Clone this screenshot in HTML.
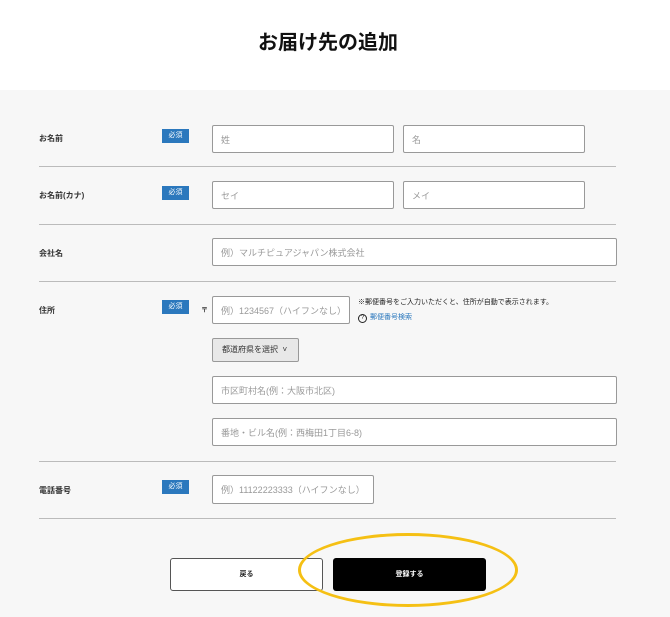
<!DOCTYPE html>
<html><head><meta charset="utf-8"><style>
*{margin:0;padding:0;box-sizing:border-box}
body{width:670px;height:617px;background:#fff;font-family:"Liberation Sans","Noto Sans CJK JP",sans-serif;position:relative;overflow:hidden}
.a{position:absolute}
.gray{left:0;top:90px;width:670px;height:527px;background:#f7f7f7}
h1{position:absolute;left:-7px;width:670px;top:26px;text-align:center;font-size:20px;font-weight:bold;color:#111}
.lb{font-size:8px;font-weight:bold;color:#333}
.bd{width:27px;height:14px;background:#2b78bd;color:#fff;font-size:7px;text-align:center;line-height:14px}
.in{background:#fff;border:1px solid #999;border-radius:2px;font-size:9px;color:#999;padding-left:8px;display:flex;align-items:center}
.ln{left:39px;width:577px;height:1px;background:#bbb}
</style></head><body>
<h1>お届け先の追加</h1>
<div class="a gray"></div>
<div class="a lb" style="left:39px;top:133px">お名前</div>
<div class="a bd" style="left:162px;top:129px">必須</div>
<div class="a in" style="left:212px;top:125px;width:182px;height:28px">姓</div>
<div class="a in" style="left:403px;top:125px;width:182px;height:28px">名</div>
<div class="a ln" style="top:166px"></div>
<div class="a lb" style="left:39px;top:190px">お名前(カナ)</div>
<div class="a bd" style="left:162px;top:186px">必須</div>
<div class="a in" style="left:212px;top:181px;width:182px;height:28px">セイ</div>
<div class="a in" style="left:403px;top:181px;width:182px;height:28px">メイ</div>
<div class="a ln" style="top:224px"></div>
<div class="a lb" style="left:39px;top:248px">会社名</div>
<div class="a in" style="left:212px;top:238px;width:405px;height:28px">例）マルチピュアジャパン株式会社</div>
<div class="a ln" style="top:281px"></div>
<div class="a lb" style="left:39px;top:305px">住所</div>
<div class="a bd" style="left:162px;top:300px">必須</div>
<div class="a lb" style="left:201px;top:305px;font-size:7px">〒</div>
<div class="a in" style="left:212px;top:296px;width:138px;height:28px">例）1234567（ハイフンなし）</div>
<div class="a" style="left:358px;top:297px;font-size:7px;color:#222">※郵便番号をご入力いただくと、住所が自動で表示されます。</div>
<div class="a" style="left:358px;top:312px;font-size:7px;color:#2b78bd"><span style="display:inline-block;width:9px;height:9px;border:1px solid #222;border-radius:50%;color:#222;font-size:6px;text-align:center;line-height:7px;margin-right:3px">?</span>郵便番号検索</div>
<div class="a" style="left:212px;top:338px;width:87px;height:24px;background:#e8e8e8;border:1px solid #999;border-radius:2px;font-size:8px;color:#333;line-height:22px;padding-left:9px">都道府県を選択 &nbsp;˅</div>
<div class="a in" style="left:212px;top:376px;width:405px;height:28px">市区町村名(例：大阪市北区)</div>
<div class="a in" style="left:212px;top:418px;width:405px;height:28px">番地・ビル名(例：西梅田1丁目6-8)</div>
<div class="a ln" style="top:461px"></div>
<div class="a lb" style="left:39px;top:485px">電話番号</div>
<div class="a bd" style="left:162px;top:480px">必須</div>
<div class="a in" style="left:212px;top:475px;width:162px;height:29px">例）11122223333（ハイフンなし）</div>
<div class="a ln" style="top:518px"></div>
<div class="a" style="left:170px;top:558px;width:153px;height:33px;background:#fff;border:1px solid #555;border-radius:3px;font-size:7px;font-weight:bold;text-align:center;line-height:31px;color:#222">戻る</div>
<div class="a" style="left:333px;top:558px;width:153px;height:33px;background:#000;border-radius:3px;font-size:7px;font-weight:bold;text-align:center;line-height:33px;color:#fff">登録する</div>
<div class="a" style="left:298px;top:533px;width:220px;height:74px;border:3px solid #f5c014;border-radius:50%"></div>
</body></html>
